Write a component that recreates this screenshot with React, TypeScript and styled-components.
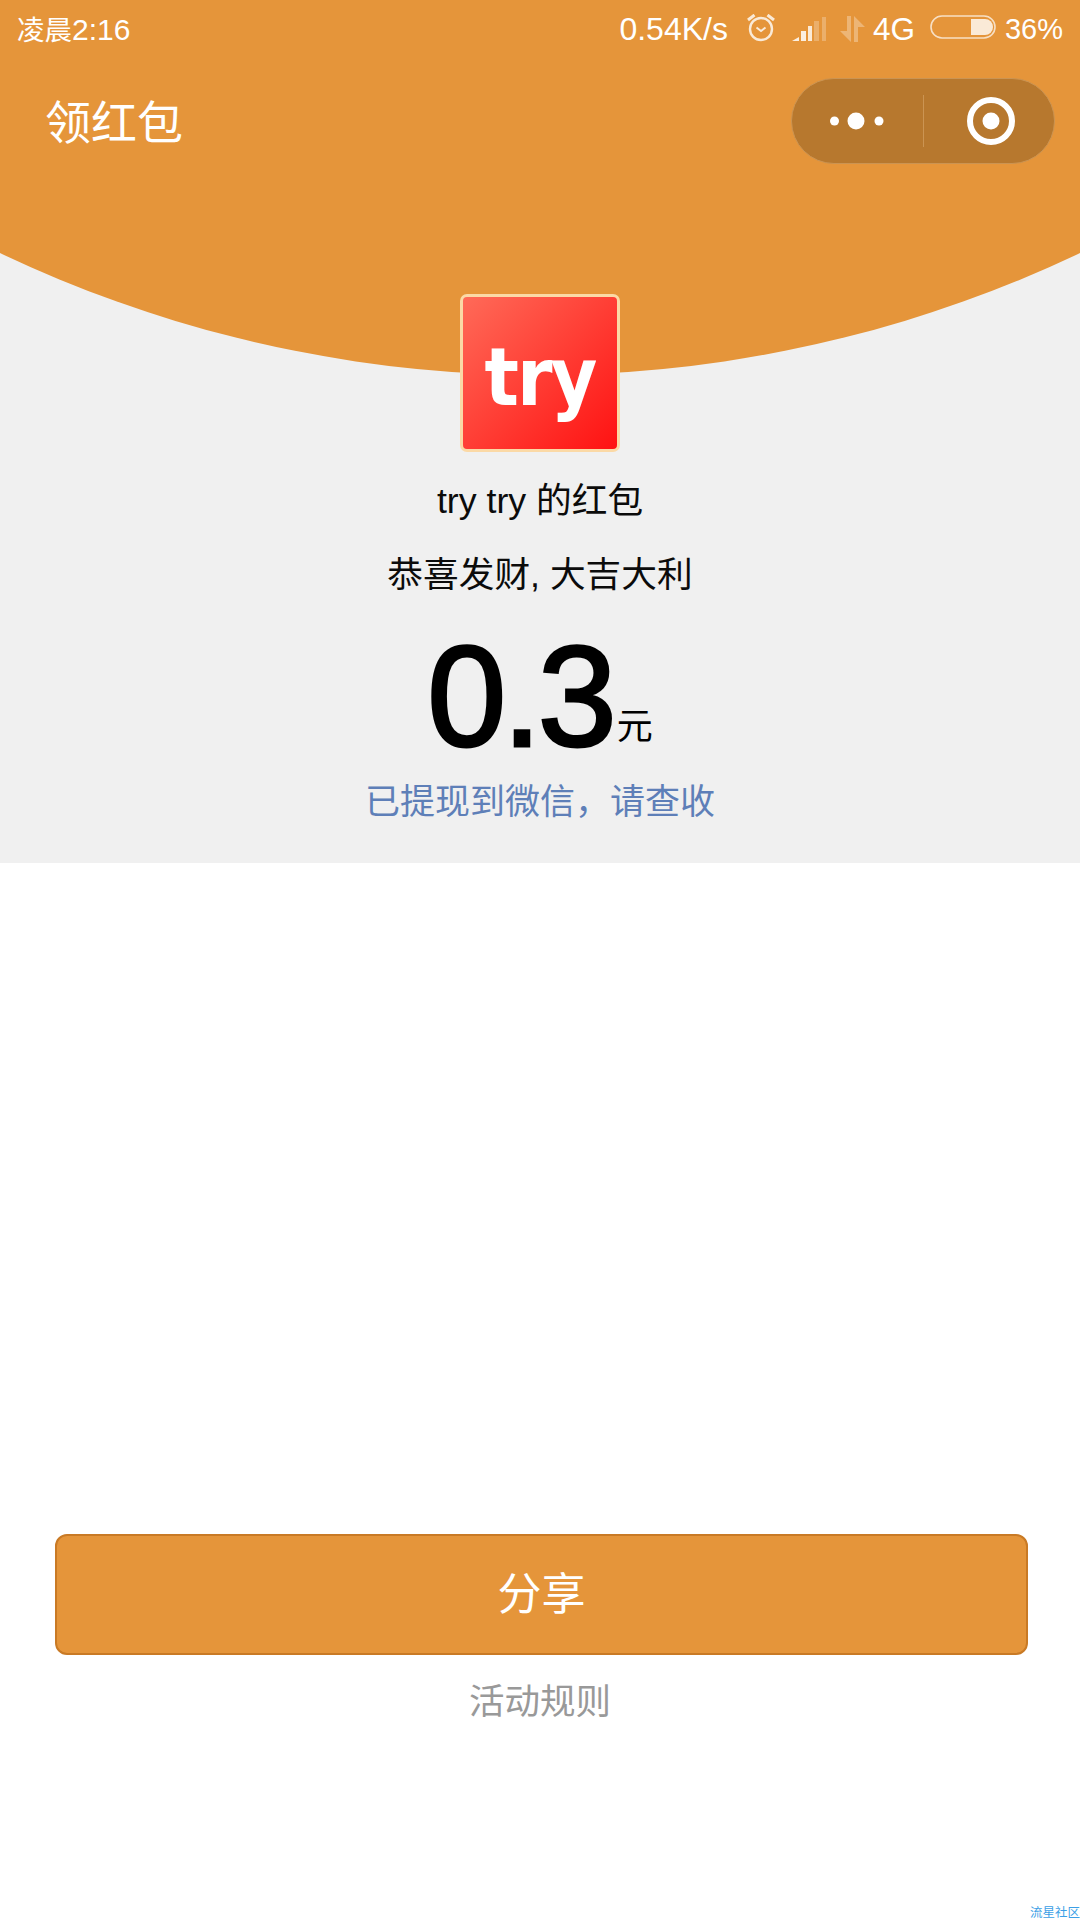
import styled, { createGlobalStyle } from "styled-components";

const FONT = `"Liberation Sans", "Noto Sans CJK SC", sans-serif`;
const ORANGE = "#e5953a";

const GlobalStyle = createGlobalStyle`
  html, body {
    margin: 0;
    padding: 0;
    background: #fff;
    font-family: ${FONT};
  }
  * {
    box-sizing: border-box;
  }
`;

const Page = styled.div`
  position: relative;
  width: 1080px;
  height: 1920px;
  overflow: hidden;
  background: #fff;
`;

const Hero = styled.section`
  position: relative;
  height: 863px;
  overflow: hidden;
  background: #f0f0f0;
`;

// big circle behind the header, only its bottom edge shows
const Curve = styled.div`
  position: absolute;
  left: -716px;
  bottom: 488px;
  width: 2512px;
  height: 2512px;
  border-radius: 50%;
  background: ${ORANGE};
`;

const HeroInner = styled.div`
  position: relative;
  display: flex;
  flex-direction: column;
`;

const StatusBar = styled.div`
  display: flex;
  align-items: center;
  justify-content: space-between;
  height: 58px;
  padding: 0 17px;
  color: #fff;
  font-size: 30px;
`;

const StatusTime = styled.span`
  margin-top: -3px;
`;

const TimePrefix = styled.span`
  font-size: 27.5px;
`;

const StatusRight = styled.div`
  display: flex;
  align-items: center;
`;

const StatusIcon = styled.svg<{ $left: number }>`
  display: block;
  margin-left: ${({ $left }) => $left}px;
`;

const StatusText = styled.span<{ $left?: number; $size?: number }>`
  margin-left: ${({ $left }) => $left ?? 0}px;
  font-size: ${({ $size }) => $size ?? 29}px;
`;

const NavBar = styled.div`
  display: flex;
  align-items: center;
  justify-content: space-between;
  height: 86px;
  margin-top: 20px;
  padding: 0 25px 0 45px;
`;

const NavTitle = styled.h1`
  margin: -4px 0 0;
  color: #fff;
  font-size: 46px;
  font-weight: 400;
`;

const Capsule = styled.div`
  display: flex;
  align-items: center;
  width: 264px;
  height: 86px;
  border: 1px solid #cb9452;
  border-radius: 43px;
  background: #b7782e;
`;

const CapsuleSide = styled.div`
  flex: 1;
  display: flex;
  align-items: center;
  justify-content: center;
`;

const CapsuleDivider = styled.div`
  width: 1px;
  height: 52px;
  background: #cb9452;
`;

const TargetSvg = styled.svg`
  display: block;
  margin-left: 5px;
`;

const Logo = styled.div`
  display: flex;
  align-items: center;
  justify-content: center;
  width: 160px;
  height: 158px;
  margin: 130px auto 0;
  border: 3px solid #fbd9a6;
  border-radius: 7px;
  background: linear-gradient(135deg, #ff6a58, #ff1212);
`;

const LogoText = styled.span`
  margin-top: 8px;
  color: #fff;
  font-family: "DejaVu Sans", sans-serif;
  font-size: 72px;
  font-weight: 700;
  line-height: 1;
  letter-spacing: -2px;
  transform: scaleY(1.12);
`;

const Line = styled.div<{ $top: number }>`
  margin-top: ${({ $top }) => $top}px;
  color: #0b0b0b;
  font-size: 35.7px;
  line-height: 50px;
  text-align: center;
`;

const Amount = styled.div`
  display: flex;
  align-items: baseline;
  justify-content: center;
  height: 150px;
  margin-top: 22px;
  color: #000;
  font-size: 142px;
  line-height: 150px;
  letter-spacing: -4px;
  -webkit-text-stroke: 3px #000;
`;

const Unit = styled.span`
  margin-left: 4px;
  font-size: 36px;
  letter-spacing: 0;
  -webkit-text-stroke: 0;
  transform: translateY(-7px);
`;

const Notice = styled.div`
  margin-top: 5px;
  color: #5e7fb8;
  font-size: 35px;
  line-height: 50px;
  text-align: center;
`;

const Footer = styled.div`
  display: flex;
  flex-direction: column;
  align-items: center;
  padding: 671px 0 0 3px;
`;

const ShareButton = styled.button`
  width: 973px;
  height: 121px;
  padding: 0 0 8px;
  border: 2px solid #c97a25;
  border-radius: 12px;
  background: ${ORANGE};
  color: #fff;
  font-family: ${FONT};
  font-size: 44px;
`;

const RulesLink = styled.div`
  margin: 22px 3px 0 0;
  color: #999;
  font-size: 35.5px;
  line-height: 50px;
`;

const Watermark = styled.div`
  position: absolute;
  right: 0;
  bottom: 0;
  color: #3c9fe6;
  font-size: 12.5px;
  line-height: 14px;
`;

const AlarmIcon = () => (
  <StatusIcon $left={18} width="30" height="30" viewBox="0 1 30 30" fill="none" stroke="#fff" strokeOpacity="0.8">
    <circle cx="15" cy="16" r="11" strokeWidth="2.4" />
    <path d="M10.5 14.5 15 18l4.5-3.5" strokeWidth="2" />
    <path d="M2 7 8.5 2M28 7 21.5 2" strokeWidth="3" />
  </StatusIcon>
);

const SignalIcon = () => (
  <StatusIcon $left={16} width="34" height="24" viewBox="0 0 34 24" fill="#fff">
    <path d="M0 24 7 20v4z" fillOpacity="0.85" />
    <rect x="9" y="14" width="5" height="10" fillOpacity="0.85" />
    <rect x="16" y="9" width="4" height="15" fillOpacity="0.8" />
    <rect x="22" y="4" width="5" height="20" fillOpacity="0.25" />
    <rect x="30" y="0" width="4" height="24" fillOpacity="0.25" />
  </StatusIcon>
);

const DataIcon = () => (
  <StatusIcon $left={14} width="25" height="26" viewBox="0 0 25 26" fill="#fff" fillOpacity="0.3">
    <path d="M7 0h4v26L0 15h7z" />
    <path d="M14 26V0l11 11h-7v15z" />
  </StatusIcon>
);

const BatteryIcon = () => (
  <StatusIcon $left={15} width="66" height="28" viewBox="0 0 66 28" fill="none">
    <rect x="1" y="1" width="64" height="22" rx="11" stroke="#fff" strokeOpacity="0.7" strokeWidth="1.6" />
    <path d="M41 4h14a8 8 0 0 1 0 16H41z" fill="#fff" fillOpacity="0.8" />
  </StatusIcon>
);

const DotsIcon = () => (
  <svg width="54" height="18" viewBox="0 0 54 18" fill="#fff">
    <circle cx="4.5" cy="9" r="4.5" />
    <circle cx="26" cy="9" r="8.5" />
    <circle cx="49" cy="9" r="4.5" />
  </svg>
);

const TargetIcon = () => (
  <TargetSvg width="48" height="48" viewBox="0 0 48 48" fill="none">
    <circle cx="24" cy="24" r="21" stroke="#fff" strokeWidth="6" />
    <circle cx="24" cy="24" r="8.5" fill="#fff" />
  </TargetSvg>
);

export default function App() {
  return (
    <Page>
      <GlobalStyle />
      <Hero>
        <Curve />
        <HeroInner>
          <StatusBar>
            <StatusTime>
              <TimePrefix>凌晨</TimePrefix>2:16
            </StatusTime>
            <StatusRight>
              <StatusText $size={32}>0.54K/s</StatusText>
              <AlarmIcon />
              <SignalIcon />
              <DataIcon />
              <StatusText $left={8} $size={31.5}>
                4G
              </StatusText>
              <BatteryIcon />
              <StatusText $left={9}>36%</StatusText>
            </StatusRight>
          </StatusBar>
          <NavBar>
            <NavTitle>领红包</NavTitle>
            <Capsule>
              <CapsuleSide>
                <DotsIcon />
              </CapsuleSide>
              <CapsuleDivider />
              <CapsuleSide>
                <TargetIcon />
              </CapsuleSide>
            </Capsule>
          </NavBar>
          <Logo>
            <LogoText>try</LogoText>
          </Logo>
          <Line $top={24}>try try 的红包</Line>
          <Line $top={24}>恭喜发财, 大吉大利</Line>
          <Amount>
            0.3<Unit>元</Unit>
          </Amount>
          <Notice>已提现到微信，请查收</Notice>
        </HeroInner>
      </Hero>
      <Footer>
        <ShareButton>分享</ShareButton>
        <RulesLink>活动规则</RulesLink>
      </Footer>
      <Watermark>流星社区</Watermark>
    </Page>
  );
}
